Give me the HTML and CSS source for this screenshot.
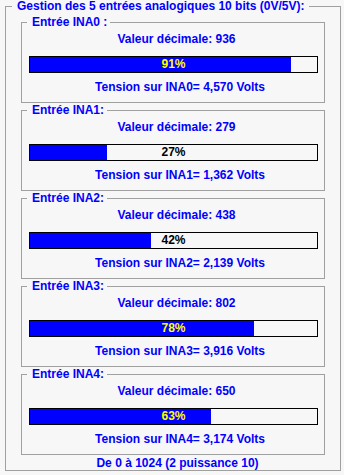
FILE: index.html
```html
<!doctype html>
<html lang="fr">

<head>
    <meta charset="UTF-8">
    <meta name="viewport" content="width=device-width, initial-scale=1.0">
    <title>Entrées analogiques</title>
    <link rel="stylesheet" href="styles.css">
</head>

<body>
    <fieldset class="panel">
        <legend>Gestion des 5 entrées analogiques 10 bits (0V/5V):</legend>

        <fieldset class="channel">
            <legend>Entrée INA0 :</legend>
            <div class="value">Valeur décimale: 936</div>
            <div class="bar">
                <div class="fill" style="width:91%"></div>
                <span class="pct light">91%</span>
            </div>
            <div class="volt">Tension sur INA0= 4,570 Volts</div>
        </fieldset>

        <fieldset class="channel">
            <legend>Entrée INA1:</legend>
            <div class="value">Valeur décimale: 279</div>
            <div class="bar">
                <div class="fill" style="width:27%"></div>
                <span class="pct">27%</span>
            </div>
            <div class="volt">Tension sur INA1= 1,362 Volts</div>
        </fieldset>

        <fieldset class="channel">
            <legend>Entrée INA2:</legend>
            <div class="value">Valeur décimale: 438</div>
            <div class="bar">
                <div class="fill" style="width:42%"></div>
                <span class="pct">42%</span>
            </div>
            <div class="volt">Tension sur INA2= 2,139 Volts</div>
        </fieldset>

        <fieldset class="channel">
            <legend>Entrée INA3:</legend>
            <div class="value">Valeur décimale: 802</div>
            <div class="bar">
                <div class="fill" style="width:78%"></div>
                <span class="pct light">78%</span>
            </div>
            <div class="volt">Tension sur INA3= 3,916 Volts</div>
        </fieldset>

        <fieldset class="channel">
            <legend>Entrée INA4:</legend>
            <div class="value">Valeur décimale: 650</div>
            <div class="bar">
                <div class="fill" style="width:63%"></div>
                <span class="pct light">63%</span>
            </div>
            <div class="volt">Tension sur INA4= 3,174 Volts</div>
        </fieldset>

        <div class="footer">De 0 à 1024 (2 puissance 10)</div>
    </fieldset>
</body>

</html>
```

FILE: styles.css
```css
body {
    margin: 0;
    background: #f7f7f7;
    font-family: 'Liberation Sans', Arial, sans-serif;
    font-size: 12px;
    font-weight: bold;
    line-height: 14px;
    color: #0000ff;
}

fieldset {
    margin: 0;
    min-width: 0;
    border: 1px solid #a0a0a0;
    box-sizing: border-box;
}

legend {
    line-height: 14px;
}

.panel {
    width: 336px;
    margin-left: 5px;
    padding: 3px 0 0 0;
}

.panel > legend {
    line-height: 12px;
    margin-left: 6px;
    padding: 0 5px 0 5px;
}

.channel {
    margin: 0 15px;
    padding: 3px 0 8px 0;
}

.channel > legend {
    margin-left: 5px;
    padding: 0 3px 0 5px;
}

.value {
    text-align: center;
    padding-left: 7px;
}

.bar {
    display: grid;
    height: 15px;
    margin: 10px 6px 0 7px;
    border: 1px solid #000;
    background: #f7f7f7;
}

.fill,
.pct {
    grid-area: 1 / 1;
}

.fill {
    height: 100%;
    background: #0000ff;
}

.pct {
    text-align: center;
    line-height: 14px;
    color: #000;
}

.pct.light {
    color: #ffff00;
}

.volt {
    margin-top: 7px;
    text-align: center;
    padding-left: 14px;
}

.footer {
    margin-top: 1px;
    text-align: center;
    padding-left: 9px;
}
```
